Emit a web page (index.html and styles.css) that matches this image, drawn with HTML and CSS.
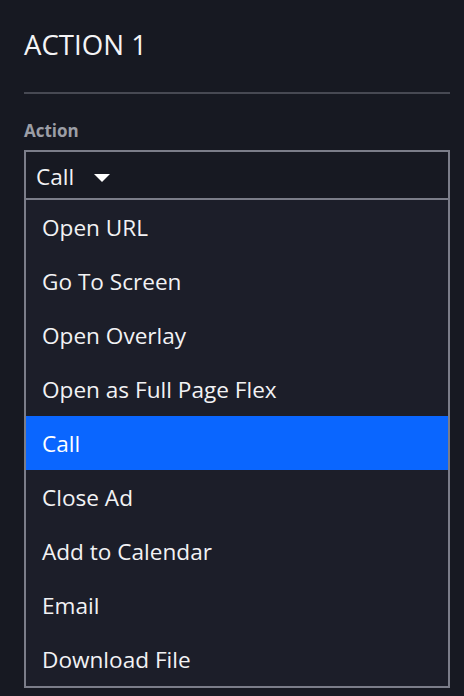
FILE: index.html
```html
<!DOCTYPE html>
<html>
<head>
<meta charset="utf-8">
<link rel="stylesheet" href="styles.css">
</head>
<body>
<div class="panel">
  <h1 class="title">ACTION 1</h1>
  <hr class="divider">
  <div class="label">Action</div>
  <div class="select">
    <div class="select-head">
      <span>Call</span>
      <svg class="caret" width="16" height="8" viewBox="0 0 16 8"><path d="M0 0H16L8 8Z" fill="#ffffff"/></svg>
    </div>
    <ul class="options">
      <li>Open URL</li>
      <li>Go To Screen</li>
      <li>Open Overlay</li>
      <li>Open as Full Page Flex</li>
      <li class="active">Call</li>
      <li>Close Ad</li>
      <li>Add to Calendar</li>
      <li>Email</li>
      <li>Download File</li>
    </ul>
  </div>
</div>
</body>
</html>
```
FILE: styles.css
```css
html, body {
  margin: 0;
  padding: 0;
  background: #171922;
  height: 100%;
  overflow: hidden;
}
body {
  font-family: "Open Sans", "Noto Sans", sans-serif;
  color: #f2f2f4;
}
.panel {
  padding: 26px 14px 0 24px;
}
.title {
  margin: 0;
  font-size: 27.6px;
  font-weight: 400;
  line-height: 36px;
  color: #f4f4f6;
}
.divider {
  margin: 30px 0 0 0;
  border: none;
  height: 2px;
  background: #474953;
}
.label {
  margin-top: 27px;
  font-size: 17px;
  font-weight: 700;
  line-height: 20px;
  color: #9c9ea6;
}
.select {
  margin-top: 9px;
  border: 2px solid #7b7d89;
}
.select-head {
  display: flex;
  align-items: center;
  gap: 20px;
  padding: 3px 0 0 10px;
  box-sizing: border-box;
  border-bottom: 2px solid #7b7d89;
  font-size: 22.6px;
  line-height: 42px;
  background: #171922;
  height: 48px;
}
.caret {
  margin-top: 2px;
}
.options {
  list-style: none;
  margin: 0;
  padding: 0;
  background: #1c1e29;
}
.options li {
  box-sizing: border-box;
  height: 54px;
  padding-top: 2px;
  line-height: 52px;
  padding-left: 16px;
  font-size: 22.6px;
  color: #f2f2f4;
}
.options li.active {
  background: #0a66ff;
  color: #ffffff;
}
```
